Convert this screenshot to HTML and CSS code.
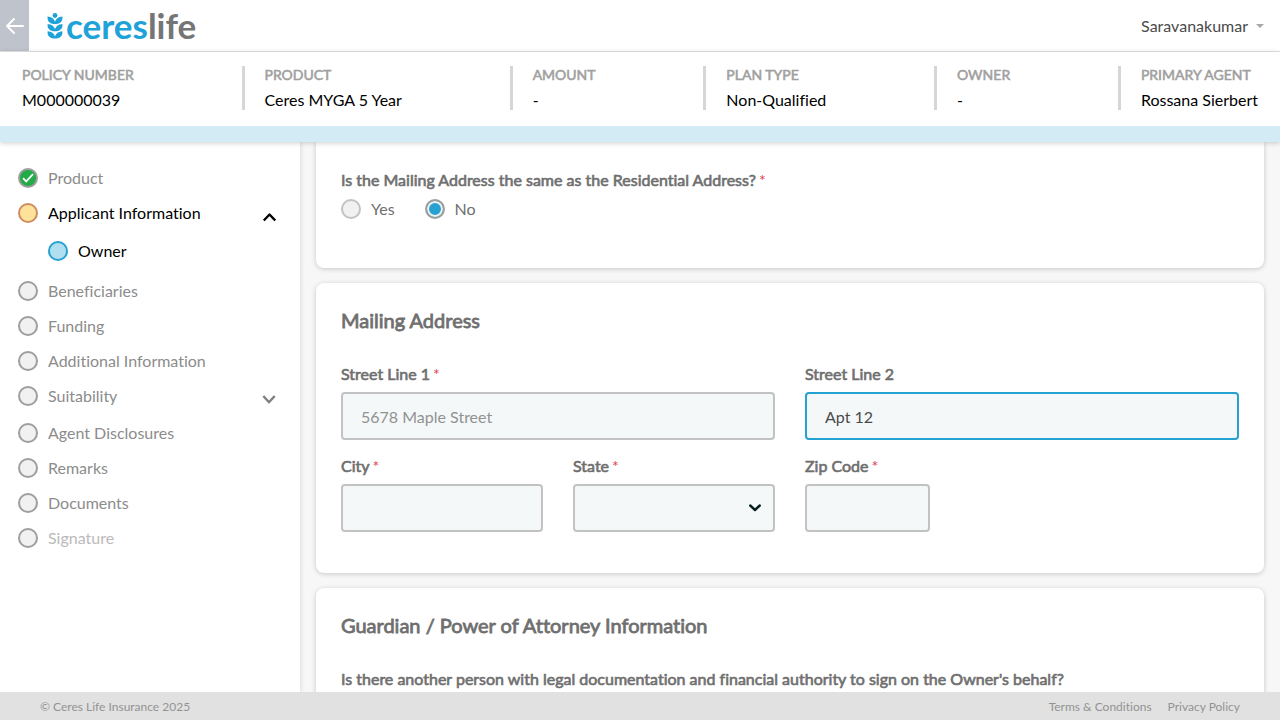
FILE: index.html
```html
<!DOCTYPE html>
<html lang="en">
<head>
<meta charset="utf-8">
<meta name="viewport" content="width=device-width, initial-scale=1">
<title>Ceres Life - Applicant Information</title>
<link rel="stylesheet" href="styles.css">
</head>
<body>
<header class="topbar">
  <button class="back" type="button" aria-label="Back">
    <svg width="18" height="16" viewBox="0 0 18 16" fill="none" stroke="#fff" stroke-width="1.9" stroke-linecap="round" stroke-linejoin="round"><path d="M17 8H1M8 1L1 8l7 7"/></svg>
  </button>
  <a class="logo" href="#">
    <svg width="16" height="26" viewBox="0 0 16 26" fill="#1ea2d8"><circle cx="8" cy="2.500" r="2.400"/><path d="M.6 3.600C4.600 3.900 7.200 5.800 8 8.800 8.800 5.800 11.400 3.900 15.400 3.600V5.400C15.400 8.600 12.200 11 8 11S.6 8.600 .6 5.400z"/><path d="M.6 10.900C4.600 11.200 7.200 13.100 8 16.100 8.800 13.100 11.400 11.200 15.400 10.900V12.700C15.400 15.900 12.200 18.300 8 18.300S.6 15.900 .6 12.700z"/><path d="M.6 18.200C4.600 18.500 7.200 20.400 8 23.400 8.800 20.400 11.400 18.500 15.400 18.200V20C15.400 23.200 12.200 25.600 8 25.600S.6 23.200 .6 20z"/></svg>
    <span class="wordmark">ceres<span class="life">life</span></span>
  </a>
  <button class="user" type="button">Saravanakumar<span class="caret"></span></button>
</header>

<dl class="policy">
  <div class="fact"><dt>POLICY NUMBER</dt><dd>M000000039</dd></div>
  <div class="fact"><dt>PRODUCT</dt><dd>Ceres MYGA 5 Year</dd></div>
  <div class="fact"><dt>AMOUNT</dt><dd>-</dd></div>
  <div class="fact"><dt>PLAN TYPE</dt><dd>Non-Qualified</dd></div>
  <div class="fact"><dt>OWNER</dt><dd>-</dd></div>
  <div class="fact"><dt>PRIMARY AGENT</dt><dd>Rossana Sierbert</dd></div>
</dl>

<div class="body">
  <nav class="sidebar">
    <ul class="steps">
      <li><a class="step" href="#"><span class="dot done"><svg width="12" height="10" viewBox="0 0 12 10" fill="none" stroke="#fff" stroke-width="1.8"><path d="M1 5.200L4.200 8.400 11 1.200"/></svg></span>Product</a></li>
      <li>
        <a class="step active" href="#"><span class="dot current"></span>Applicant Information
          <svg class="chevron" width="14" height="12" viewBox="0 0 14 12" fill="none" stroke="#000" stroke-width="2.400" stroke-linejoin="round"><path d="M1.800 9.500L7.500 3.500l5.700 6"/></svg></a>
        <ul class="substeps">
          <li><a class="step active" href="#"><span class="dot owner"></span>Owner</a></li>
        </ul>
      </li>
      <li><a class="step" href="#"><span class="dot"></span>Beneficiaries</a></li>
      <li><a class="step" href="#"><span class="dot"></span>Funding</a></li>
      <li><a class="step" href="#"><span class="dot"></span>Additional Information</a></li>
      <li class="group"><a class="step" href="#"><span class="dot"></span>Suitability
          <svg class="chevron" width="14" height="12" viewBox="0 0 14 12" fill="none" stroke="#808080" stroke-width="2.400" stroke-linejoin="round"><path d="M1.300 2L7 8.300 12.700 2"/></svg></a></li>
      <li><a class="step" href="#"><span class="dot"></span>Agent Disclosures</a></li>
      <li><a class="step" href="#"><span class="dot"></span>Remarks</a></li>
      <li><a class="step" href="#"><span class="dot"></span>Documents</a></li>
      <li><a class="step disabled" href="#"><span class="dot"></span>Signature</a></li>
    </ul>
  </nav>

  <main class="content">
    <section class="card continued">
      <fieldset class="question">
        <legend class="label">Is the Mailing Address the same as the Residential Address?<span class="req">*</span></legend>
        <div class="options">
          <label class="option"><input type="radio" name="same-address">Yes</label>
          <label class="option"><input type="radio" name="same-address" checked>No</label>
        </div>
      </fieldset>
    </section>

    <section class="card">
      <h2>Mailing Address</h2>
      <form class="fields">
        <div class="field wide">
          <label class="label" for="street1">Street Line 1<span class="req">*</span></label>
          <input class="control" id="street1" type="text" placeholder="5678 Maple Street">
        </div>
        <div class="field wide">
          <label class="label" for="street2">Street Line 2</label>
          <input class="control focused" id="street2" type="text" value="Apt 12">
        </div>
        <div class="field">
          <label class="label" for="city">City<span class="req">*</span></label>
          <input class="control" id="city" type="text">
        </div>
        <div class="field">
          <label class="label" for="state">State<span class="req">*</span></label>
          <div class="select">
            <select class="control" id="state"><option></option></select>
            <svg class="arrow" width="12" height="8" viewBox="0 0 12 8" fill="none" stroke="#0b1f22" stroke-width="2.400" stroke-linecap="round" stroke-linejoin="round"><path d="M1.200 1.500L6 6l4.800-4.500"/></svg>
          </div>
        </div>
        <div class="field">
          <label class="label" for="zip">Zip Code<span class="req">*</span></label>
          <input class="control zip" id="zip" type="text">
        </div>
      </form>
    </section>

    <section class="card">
      <h2>Guardian / Power of Attorney Information</h2>
      <p class="label">Is there another person with legal documentation and financial authority to sign on the Owner's behalf?</p>
    </section>
  </main>
</div>

<footer class="footer">
  <span>© Ceres Life Insurance 2025</span>
  <div class="links"><a href="#">Terms &amp; Conditions</a><a href="#">Privacy Policy</a></div>
</footer>
</body>
</html>
```
FILE: styles.css
```css
* { box-sizing: border-box; }

body {
  margin: 0;
  height: 100vh;
  display: flex;
  flex-direction: column;
  overflow: hidden;
  background: #f7f7f7;
  color: #6f6f6f;
  font: 16px/20px Lato, "Open Sans", sans-serif;
  font-variant-ligatures: none;
}

a { color: inherit; text-decoration: none; }
button, input, select { font: inherit; }
ul, dl, dd, p { margin: 0; padding: 0; list-style: none; }

.topbar {
  display: flex;
  flex: none;
  height: 52px;
  background: #fff;
  border-bottom: 1px solid #e4e4e4;
}

.back {
  display: flex;
  align-items: center;
  justify-content: center;
  width: 29px;
  padding: 0;
  border: 0;
  background: #bfc3cc;
}

.logo {
  display: flex;
  align-items: center;
  gap: 3px;
  margin-left: 18px;
}

.wordmark {
  color: #1ea2d8;
  font-size: 35px;
  font-weight: 700;
  line-height: 40px;
  padding-bottom: 2px;
}

.life { color: #757575; }

.user {
  display: flex;
  align-items: center;
  gap: 8px;
  margin-left: auto;
  padding: 0 16px;
  border: 0;
  background: none;
  color: #4a4a4a;
}

.caret {
  border: 4px solid transparent;
  border-top-color: #a8a8a8;
  border-bottom: 0;
}

.policy {
  position: relative;
  display: flex;
  flex: none;
  justify-content: space-between;
  padding: 14px 22px 16px;
  background: #fff;
  border-bottom: 16px solid #d3ebf4;
  box-shadow: 0 1px 5px rgba(0, 0, 0, 0.2);
  z-index: 1;
}

.fact + .fact {
  padding-left: 20px;
  border-left: 3px solid #d6d6d6;
}

.fact dt {
  color: #a0a0a0;
  font-size: 14px;
  line-height: 18px;
  -webkit-text-stroke: 0.04em currentColor;
}

.fact dd {
  margin-top: 6px;
  color: #000;
}

.body {
  display: flex;
  flex: 1;
  min-height: 0;
}

.sidebar {
  flex: none;
  width: 300px;
  padding: 26px 24px 0 18px;
  background: #fff;
  box-shadow: 0 0 5px rgba(0, 0, 0, 0.16);
}

.steps {
  display: flex;
  flex-direction: column;
  gap: 15px;
}

.step {
  display: flex;
  align-items: center;
  gap: 10px;
  color: #8c8c8c;
}

.step.active { color: #000; }
.step.disabled { color: #bababa; }
.substeps { padding: 18px 0 5px 30px; }
.group { padding-bottom: 2px; }

.chevron {
  align-self: flex-end;
  margin-left: auto;
}

.dot {
  display: flex;
  align-items: center;
  justify-content: center;
  flex: none;
  width: 20px;
  height: 20px;
  border: 2px solid #9e9e9e;
  border-radius: 50%;
  background: #f1f1f1;
}

.dot.done { background: #22ac47; }
.dot.current { background: #ffe29a; border-color: #cf8c62; }
.dot.owner { background: #b0dfef; border-color: #26a2d2; }

.content {
  display: flex;
  flex: 1;
  flex-direction: column;
  gap: 15px;
  min-width: 0;
  padding: 0 16px;
  overflow: hidden;
}

.card {
  flex: none;
  padding: 24px 25px 41px;
  border-radius: 8px;
  background: #fff;
  box-shadow: 0 1px 5px rgba(0, 0, 0, 0.2);
}

.card.continued {
  padding-top: 28px;
  padding-bottom: 49px;
  border-radius: 0 0 8px 8px;
}

.question {
  margin: 0;
  padding: 0;
  border: 0;
}

.label {
  display: block;
  padding: 0;
  -webkit-text-stroke: 0.04em currentColor;
}

.req {
  margin-left: 3px;
  color: #e04050;
  -webkit-text-stroke: 0;
}

.options {
  display: flex;
  gap: 30px;
  padding-top: 9px;
}

.option {
  display: flex;
  align-items: center;
  gap: 10px;
}

.option input {
  appearance: none;
  width: 20px;
  height: 20px;
  margin: 0;
  border: 2px solid #c2c2c2;
  border-radius: 50%;
  background: #f1f1f1;
}

.option input:checked {
  border-color: #9e9e9e;
  background: #26a2d2;
  box-shadow: inset 0 0 0 2px #f1f1f1;
}

h2 {
  margin: 0 0 31px;
  font-size: 20px;
  line-height: 26px;
  font-weight: 400;
  -webkit-text-stroke: 0.04em currentColor;
}

.fields {
  display: grid;
  grid-template-columns: repeat(4, 1fr);
  gap: 16px 30px;
}

.field.wide { grid-column: span 2; }

.control {
  display: block;
  width: 100%;
  height: 48px;
  margin-top: 8px;
  padding: 0 18px;
  border: 2px solid #c2c2c2;
  border-radius: 4px;
  outline: 0;
  appearance: none;
  background: #f4f8f9;
  color: #4a4a4a;
}

.control::placeholder { color: #929292; }
.control.focused { border-color: #26a2d2; }
.control.zip { width: 125px; }

.select { position: relative; }

.arrow {
  position: absolute;
  right: 14px;
  top: 20px;
  pointer-events: none;
}

.footer {
  position: relative;
  display: flex;
  flex: none;
  align-items: center;
  justify-content: space-between;
  padding: 5px 40px 3px;
  background: #e1e1e1;
  color: #939393;
  font-size: 12px;
}

.links {
  display: flex;
  gap: 16px;
}
```
